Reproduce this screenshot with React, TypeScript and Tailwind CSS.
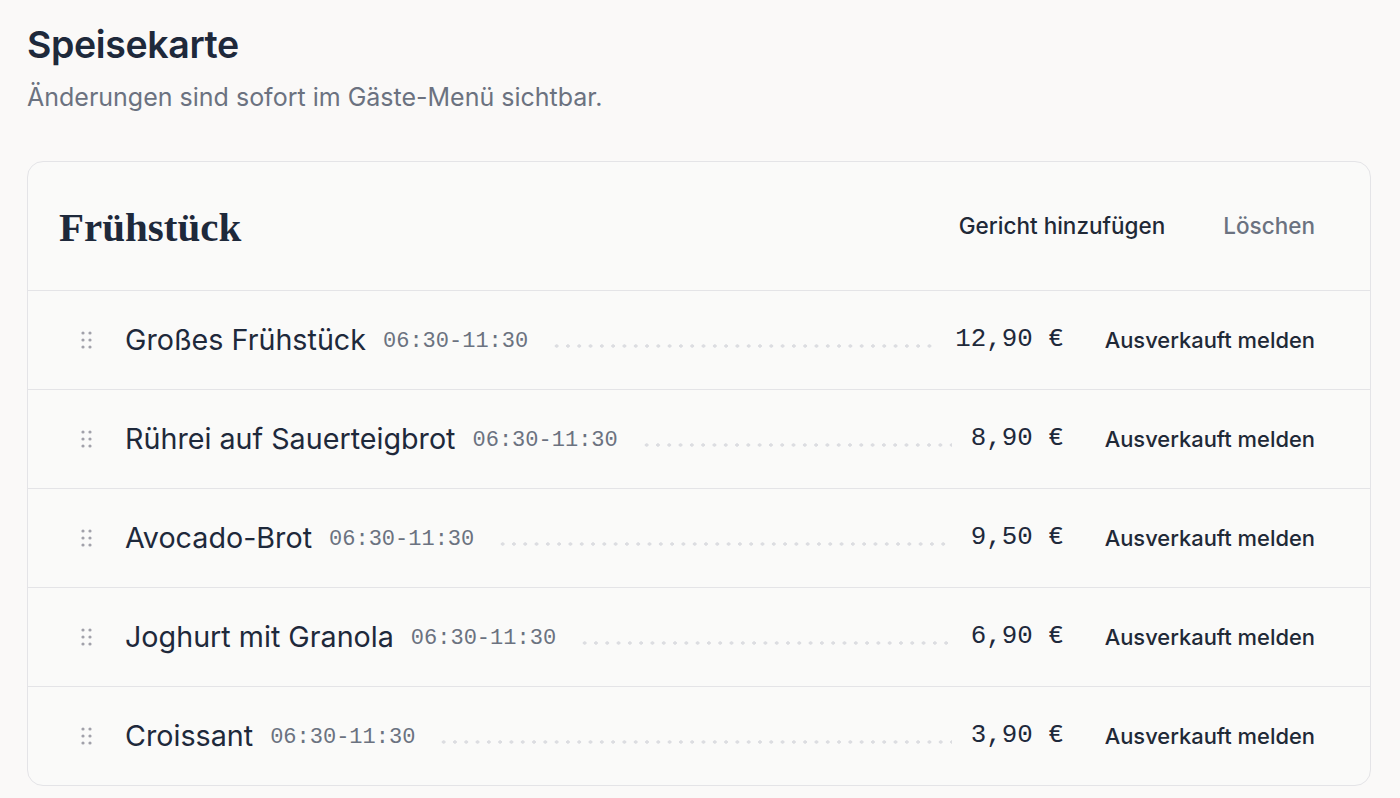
import React from "react";

const items = [
  { name: "Großes Frühstück", price: "12,90 €" },
  { name: "Rührei auf Sauerteigbrot", price: "8,90 €" },
  { name: "Avocado-Brot", price: "9,50 €" },
  { name: "Joghurt mit Granola", price: "6,90 €" },
  { name: "Croissant", price: "3,90 €" },
];

function Handle() {
  return (
    <svg width="12" height="20" viewBox="0 0 12 20" className="shrink-0">
      {[0, 1].map((c) =>
        [0, 1, 2].map((r) => (
          <circle key={`${c}-${r}`} cx={2 + c * 7} cy={3 + r * 7} r="1.6" fill="#a1a1aa" />
        ))
      )}
    </svg>
  );
}

export default function App() {
  return (
    <div
      className="min-h-[798px] w-full bg-[#faf9f8] px-[27px] pt-[22px] text-[#1f2937]"
      style={{ fontFamily: "Inter, 'Noto Sans', sans-serif" }}
    >
      <h1 className="text-[37.5px] font-semibold leading-[46px] tracking-[-0.01em] text-[#1e293b]">Speisekarte</h1>
      <p className="mt-[14px] text-[25px] leading-[30px] text-[#6b7280]">
        Änderungen sind sofort im Gäste-Menü sichtbar.
      </p>
      <div className="mt-[49px] w-[1344px] rounded-[16px] border border-[#e4e4e7] bg-[#fafaf9]">
        <div className="flex h-[128px] items-center pl-[31px] pr-[55px]">
          <h2
            className="mt-[2px] text-[41px] font-bold leading-none text-[#1e293b]"
            style={{ fontFamily: "'Liberation Serif', 'DejaVu Serif', serif" }}
          >
            Frühstück
          </h2>
          <div className="ml-auto flex items-center gap-[58px]">
            <button className="text-[22.5px] font-medium text-[#1f2937]">Gericht hinzufügen</button>
            <button className="text-[22.5px] font-medium text-[#6b7280]">Löschen</button>
          </div>
        </div>
        {items.map((it) => (
          <div key={it.name} className="flex h-[99px] items-center border-t border-[#e4e4e7] pl-[53px] pr-[55px]">
            <Handle />
            <span className="ml-[32px] whitespace-nowrap text-[28.7px] leading-none text-[#1e293b]">{it.name}</span>
            <span
              className="ml-[17px] mt-[4px] whitespace-nowrap text-[22px] leading-none text-[#6b7280]"
              style={{ fontFamily: "'Liberation Mono', 'DejaVu Sans Mono', monospace" }}
            >
              06:30-11:30
            </span>
            <span className="ml-[23px] mr-[19px] mt-[12px] h-[4px] flex-1 bg-[radial-gradient(circle,#dcdde1_1.5px,transparent_1.8px)] bg-[length:11.3px_4px] bg-repeat-x" />
            <span
              className="whitespace-nowrap text-[25.8px] leading-none text-[#1e293b]"
              style={{ fontFamily: "'Liberation Mono', 'DejaVu Sans Mono', monospace" }}
            >
              {it.price}
            </span>
            <button className="ml-[41px] whitespace-nowrap text-[21.9px] font-medium text-[#1f2937]">
              Ausverkauft melden
            </button>
          </div>
        ))}
      </div>
    </div>
  );
}
